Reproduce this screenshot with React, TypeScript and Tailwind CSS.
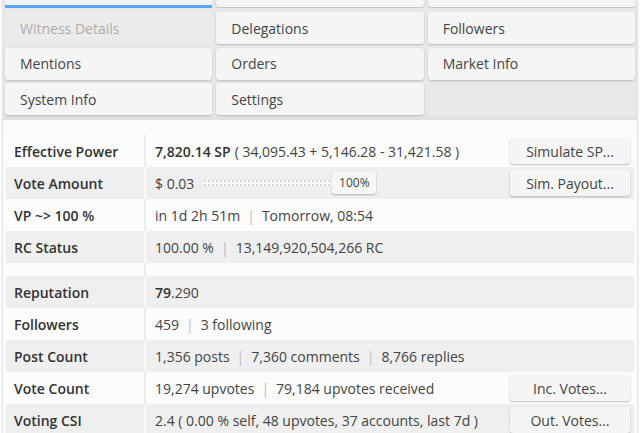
import React from "react";

const tabs = [
  { label: "Witness Details", disabled: true },
  { label: "Delegations" },
  { label: "Followers" },
  { label: "Mentions" },
  { label: "Orders" },
  { label: "Market Info" },
  { label: "System Info" },
  { label: "Settings" },
];

function Sep() {
  return <span className="mx-[7px] text-[#bcbcbc]">|</span>;
}

function SideButton({ children }: { children: React.ReactNode }) {
  return (
    <button className="ml-auto h-[26px] w-[120px] shrink-0 rounded-[3px] bg-[#f5f5f5] text-[14px] text-[#444] shadow-[0_1px_2px_rgba(0,0,0,0.25)]">
      {children}
    </button>
  );
}

type Row = {
  label: string;
  value: React.ReactNode;
  action?: React.ReactNode;
};

function InfoRow({ row, shaded }: { row: Row; shaded: boolean }) {
  return (
    <div className={`flex h-[32px] ${shaded ? "bg-[#efefef]" : "bg-[#fcfcfc]"}`}>
      <div
        className={`flex w-[140px] shrink-0 items-center border-r-2 pl-[8px] font-semibold text-[#333] ${
          shaded ? "border-[#fafafa]" : "border-[#ececec]"
        }`}
      >
        {row.label}
      </div>
      <div className="flex flex-1 items-center pl-[9px] pr-[4px] text-[#444]">
        <div className="flex items-center whitespace-nowrap">{row.value}</div>
        {row.action}
      </div>
    </div>
  );
}

export default function App() {
  const upper: Row[] = [
    {
      label: "Effective Power",
      value: (
        <>
          <span className="font-semibold text-[#333]">7,820.14 SP</span>
          <span className="ml-[4px]">( 34,095.43 + 5,146.28 - 31,421.58 )</span>
        </>
      ),
      action: <SideButton>Simulate SP...</SideButton>,
    },
    {
      label: "Vote Amount",
      value: (
        <>
          <span>$ 0.03</span>
          <div className="ml-[10px] flex items-center">
            <div className="h-[6px] w-[130px] border-y-2 border-dotted border-[#d6d6d6] bg-[#f8f8f8]" />
            <span className="-ml-[2px] flex h-[22px] w-[44px] items-center justify-center rounded-[3px] bg-[#f6f6f6] text-[12px] text-[#444] shadow-[0_1px_2px_rgba(0,0,0,0.25)]">
              100%
            </span>
          </div>
        </>
      ),
      action: <SideButton>Sim. Payout...</SideButton>,
    },
    {
      label: "VP ~> 100 %",
      value: (
        <>
          in 1d 2h 51m<Sep />Tomorrow, 08:54
        </>
      ),
    },
    {
      label: "RC Status",
      value: (
        <>
          100.00 %<Sep />13,149,920,504,266 RC
        </>
      ),
    },
  ];

  const lower: Row[] = [
    {
      label: "Reputation",
      value: (
        <>
          <span className="font-semibold text-[#333]">79</span>.290
        </>
      ),
    },
    {
      label: "Followers",
      value: (
        <>
          459<Sep />3 following
        </>
      ),
    },
    {
      label: "Post Count",
      value: (
        <>
          1,356 posts<Sep />7,360 comments<Sep />8,766 replies
        </>
      ),
    },
    {
      label: "Vote Count",
      value: (
        <>
          19,274 upvotes<Sep />79,184 upvotes received
        </>
      ),
      action: <SideButton>Inc. Votes...</SideButton>,
    },
    {
      label: "Voting CSI",
      value: <>2.4 ( 0.00 % self, 48 upvotes, 37 accounts, last 7d )</>,
      action: <SideButton>Out. Votes...</SideButton>,
    },
  ];

  return (
    <div className="h-[433px] w-[640px] overflow-hidden bg-[#fafafa] font-['Open_Sans',sans-serif] text-[14px]">
      <div className="mx-[2px] bg-[#e8e8e8] px-[3px] pb-[5px] shadow-[inset_0_-3px_4px_rgba(0,0,0,0.04)]">
        {/* partially scrolled row */}
        <div className="grid h-[8px] grid-cols-3 gap-x-[4px] overflow-hidden">
          <div className="h-[8px] border-b-[3px] border-[#5aa7f2] bg-[#f3f3f3]" />
          <div className="h-[7px] rounded-b-[3px] bg-[#f5f5f5] shadow-[0_1px_2px_rgba(0,0,0,0.2)]" />
          <div className="h-[7px] rounded-b-[3px] bg-[#f5f5f5] shadow-[0_1px_2px_rgba(0,0,0,0.2)]" />
        </div>
        <div className="mt-[4px] grid grid-cols-3 gap-x-[4px] gap-y-[3.5px]">
          {tabs.map((t) =>
            t.disabled ? (
              <div
                key={t.label}
                className="flex h-[32px] items-center rounded-[3px] bg-[#ebebeb] pl-[15px] text-[#adadad]"
              >
                {t.label}
              </div>
            ) : (
              <div
                key={t.label}
                className="flex h-[32px] items-center rounded-[3px] bg-[#f5f5f5] pl-[15px] text-[#444] shadow-[0_1px_2px_rgba(0,0,0,0.2)]"
              >
                {t.label}
              </div>
            )
          )}
        </div>
      </div>
      <div className="mx-[2px] h-full border-x border-[#e2e2e2] bg-[#fbfbfb] pt-[15px]">
        <div className="ml-[3px] mr-[3px]">
          {upper.map((r, i) => (
            <InfoRow key={r.label} row={r} shaded={i % 2 === 1} />
          ))}
          <div className="flex h-[13px] bg-[#fcfcfc]">
            <div className="w-[140px] border-r-2 border-[#ececec]" />
          </div>
          {lower.map((r, i) => (
            <InfoRow key={r.label} row={r} shaded={i % 2 === 0} />
          ))}
        </div>
      </div>
    </div>
  );
}
